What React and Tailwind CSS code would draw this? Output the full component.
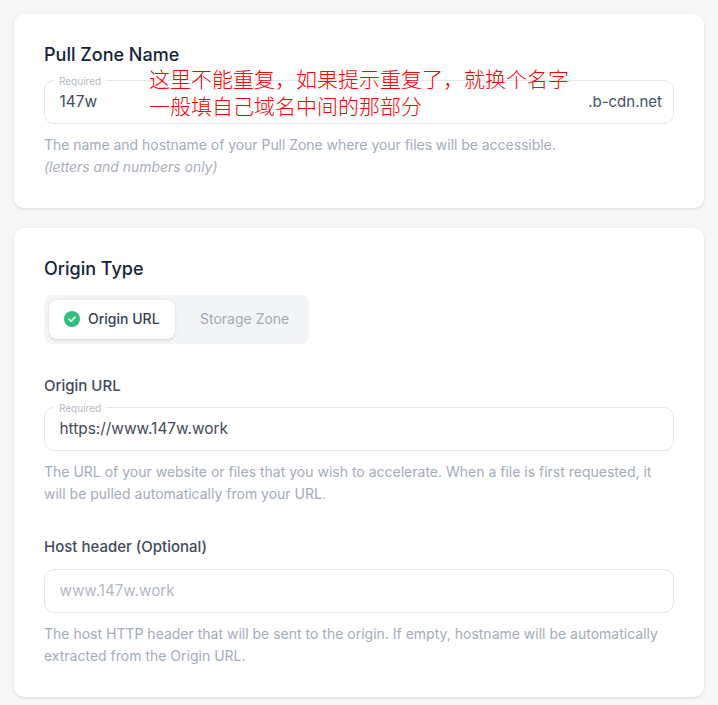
import React from 'react';

function RequiredInput({ value, suffix }) {
  return (
    <div className="relative h-[44px] rounded-[10px] border border-[#e5e7eb] bg-white flex items-center justify-between pl-[14.5px] pr-[11px] text-[#3f4a5a]">
      <span className="absolute left-[9px] top-[-6px] bg-white px-[5px] text-[10px] leading-[12px] text-[#b4b9c2]">Required</span>
      <span className="text-[15.4px]">{value}</span>
      {suffix && <span className="text-[15px] text-[#3f5266]">{suffix}</span>}
    </div>
  );
}

function Help({ children, className = '' }) {
  return <p className={`mt-[10px] text-[14px] leading-[22px] text-[#a4acb9] ${className}`}>{children}</p>;
}

export default function App() {
  return (
    <div className="relative h-[705px] w-[718px] overflow-hidden bg-[#f6f6f7] px-[14px] pt-[14px] font-['Inter',sans-serif]">
      <section className="rounded-[10px] bg-white px-[30px] pt-[29px] pb-[30px] shadow-[0_1px_3px_rgba(0,0,0,0.12)]">
        <h2 className="text-[18px] leading-[24px] font-[450] text-[#14233b]">Pull Zone Name</h2>
        <div className="mt-[13px]">
          <RequiredInput value="147w" suffix=".b-cdn.net" />
        </div>
        <Help className="tracking-[-0.04px]">
          The name and hostname of your Pull Zone where your files will be accessible.
          <br />
          <em className="text-[#a9afba]">(letters and numbers only)</em>
        </Help>
      </section>

      <section className="mt-[20px] rounded-[10px] bg-white px-[30px] pt-[29px] pb-[30px] shadow-[0_1px_3px_rgba(0,0,0,0.12)]">
        <h2 className="text-[18px] leading-[24px] font-[450] text-[#14233b]">Origin Type</h2>

        <div className="mt-[14px] flex h-[49px] w-[265px] items-center rounded-[8px] bg-[#f3f4f6] p-[5px]">
          <div className="flex h-[39px] w-[126px] items-center gap-[8px] rounded-[8px] bg-white pb-[2px] pl-[15px] text-[14px] font-medium text-[#374151] shadow-[0_1px_3px_rgba(0,0,0,0.14)]">
            <svg viewBox="0 0 16 16" className="mt-[1px] h-[16px] w-[16px]">
              <circle cx="8" cy="8" r="8" fill="#2fc07f" />
              <path d="M4.9 8.2l2.1 2.1 4.1-4.2" fill="none" stroke="#fff" strokeWidth="1.6" strokeLinecap="round" strokeLinejoin="round" />
            </svg>
            <span>Origin URL</span>
          </div>
          <div className="pb-[2px] pl-[25px] text-[14px] font-normal text-[#a4a9b3]">Storage Zone</div>
        </div>

        <label className="mt-[31px] block text-[15px] leading-[22px] font-[450] text-[#414b5b]">Origin URL</label>
        <div className="mt-[10px]">
          <RequiredInput value="https://www.147w.work" />
        </div>
        <Help>
          The URL of your website or files that you wish to accelerate. When a file is first requested, it will be pulled automatically from your URL.
        </Help>

        <label className="mt-[31px] block text-[15px] leading-[22px] font-[450] text-[#414b5b]">Host header (Optional)</label>
        <div className="mt-[11px] flex h-[44px] items-center rounded-[10px] border border-[#e5e7eb] bg-white pl-[14.5px] text-[15.2px] text-[#b4b9c2]">
          www.147w.work
        </div>
        <Help>
          The host HTTP header that will be sent to the origin. If empty, hostname will be automatically extracted from the Origin URL.
        </Help>
      </section>

      {/* red note pasted over the screenshot */}
      <div className="absolute left-[149px] top-[65px] text-[21px] leading-[27px] font-light whitespace-nowrap text-[#ff0000] font-['Noto_Sans_CJK_SC',sans-serif]">
        {'这里不能重复\uFF0C如果提示重复了\uFF0C就换个名字'}
        <br />
        一般填自己域名中间的那部分
      </div>
    </div>
  );
}
